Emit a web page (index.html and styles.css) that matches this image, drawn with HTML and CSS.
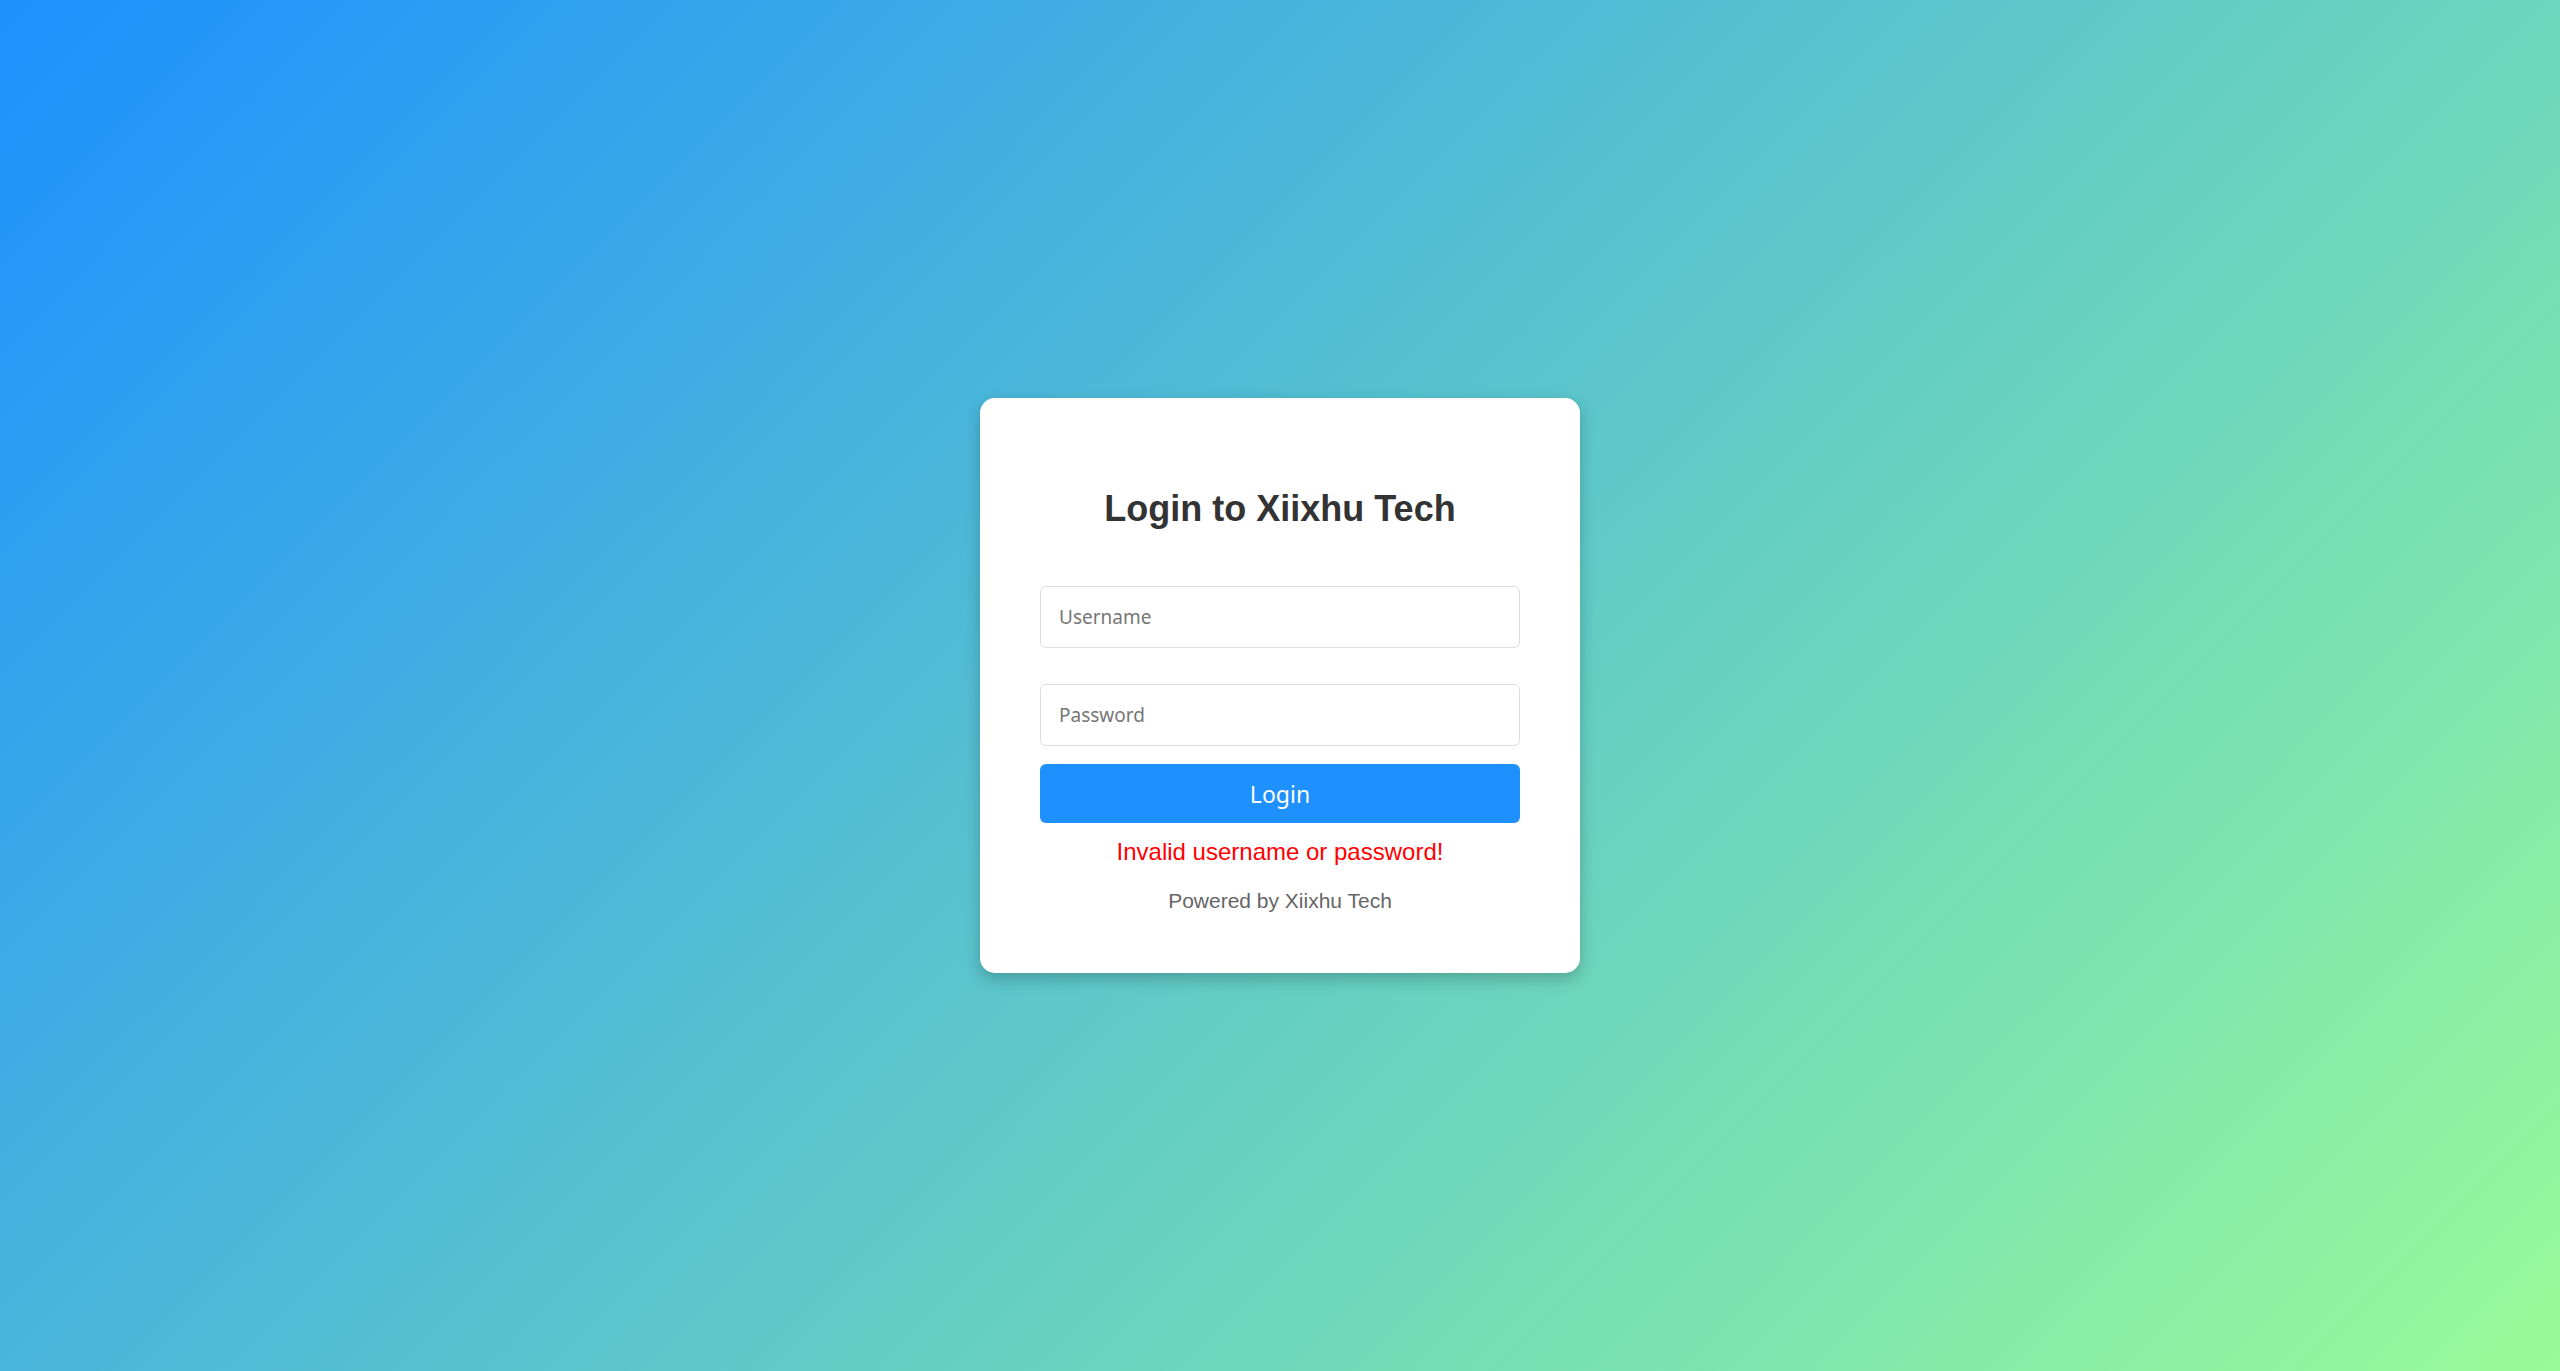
FILE: index.html
```html
<!DOCTYPE html>
<html lang="en">
<head>
<meta charset="utf-8">
<title>Login to Xiixhu Tech</title>
<link rel="stylesheet" href="styles.css">
</head>
<body>
<div class="page">
  <div class="card">
    <h2 class="title">Login to Xiixhu Tech</h2>
    <form class="form">
      <input class="field field-user" type="text" placeholder="Username">
      <input class="field field-pass" type="password" placeholder="Password">
      <button class="btn" type="button">Login</button>
    </form>
    <p class="error">Invalid username or password!</p>
    <p class="powered">Powered by Xiixhu Tech</p>
  </div>
</div>
</body>
</html>
```

FILE: styles.css
```css
html, body {
  margin: 0;
  padding: 0;
  height: 100%;
}
body {
  font-family: "Liberation Sans", Arial, sans-serif;
  background: linear-gradient(135deg, #1e90ff 0%, #98fb98 100%);
}
.page {
  height: 100vh;
  display: flex;
  align-items: center;
  justify-content: center;
}
.card {
  box-sizing: border-box;
  width: 600px;
  background: #fff;
  border-radius: 15px;
  padding: 60px 60px 60px;
  box-shadow: 0 6px 16px rgba(0, 0, 0, 0.22);
  text-align: center;
}
.title {
  margin: 30px 0 0;
  font-size: 36px;
  font-weight: bold;
  color: #333;
  line-height: 42px;
}
.form {
  display: flex;
  flex-direction: column;
  margin-top: 56px;
}
.field {
  box-sizing: border-box;
  height: 62px;
  border: 1px solid #ddd;
  border-radius: 6px;
  padding: 0 18px;
  font-family: "Noto Sans", "Open Sans", sans-serif;
  font-size: 19px;
  color: #333;
  outline: none;
}
.field::placeholder {
  color: #767676;
}
.field-pass {
  margin-top: 36px;
}
.btn {
  margin-top: 18px;
  height: 59px;
  border: none;
  border-radius: 6px;
  background: #1e90ff;
  color: #fff;
  font-family: "Noto Sans", "Open Sans", sans-serif;
  font-size: 23px;
  cursor: pointer;
}
.error {
  margin: 15px 0 0;
  color: #ff0000;
  font-size: 24px;
  line-height: 28px;
}
.powered {
  margin: 23px 0 0;
  color: #666;
  font-size: 21px;
  line-height: 24px;
}
```
